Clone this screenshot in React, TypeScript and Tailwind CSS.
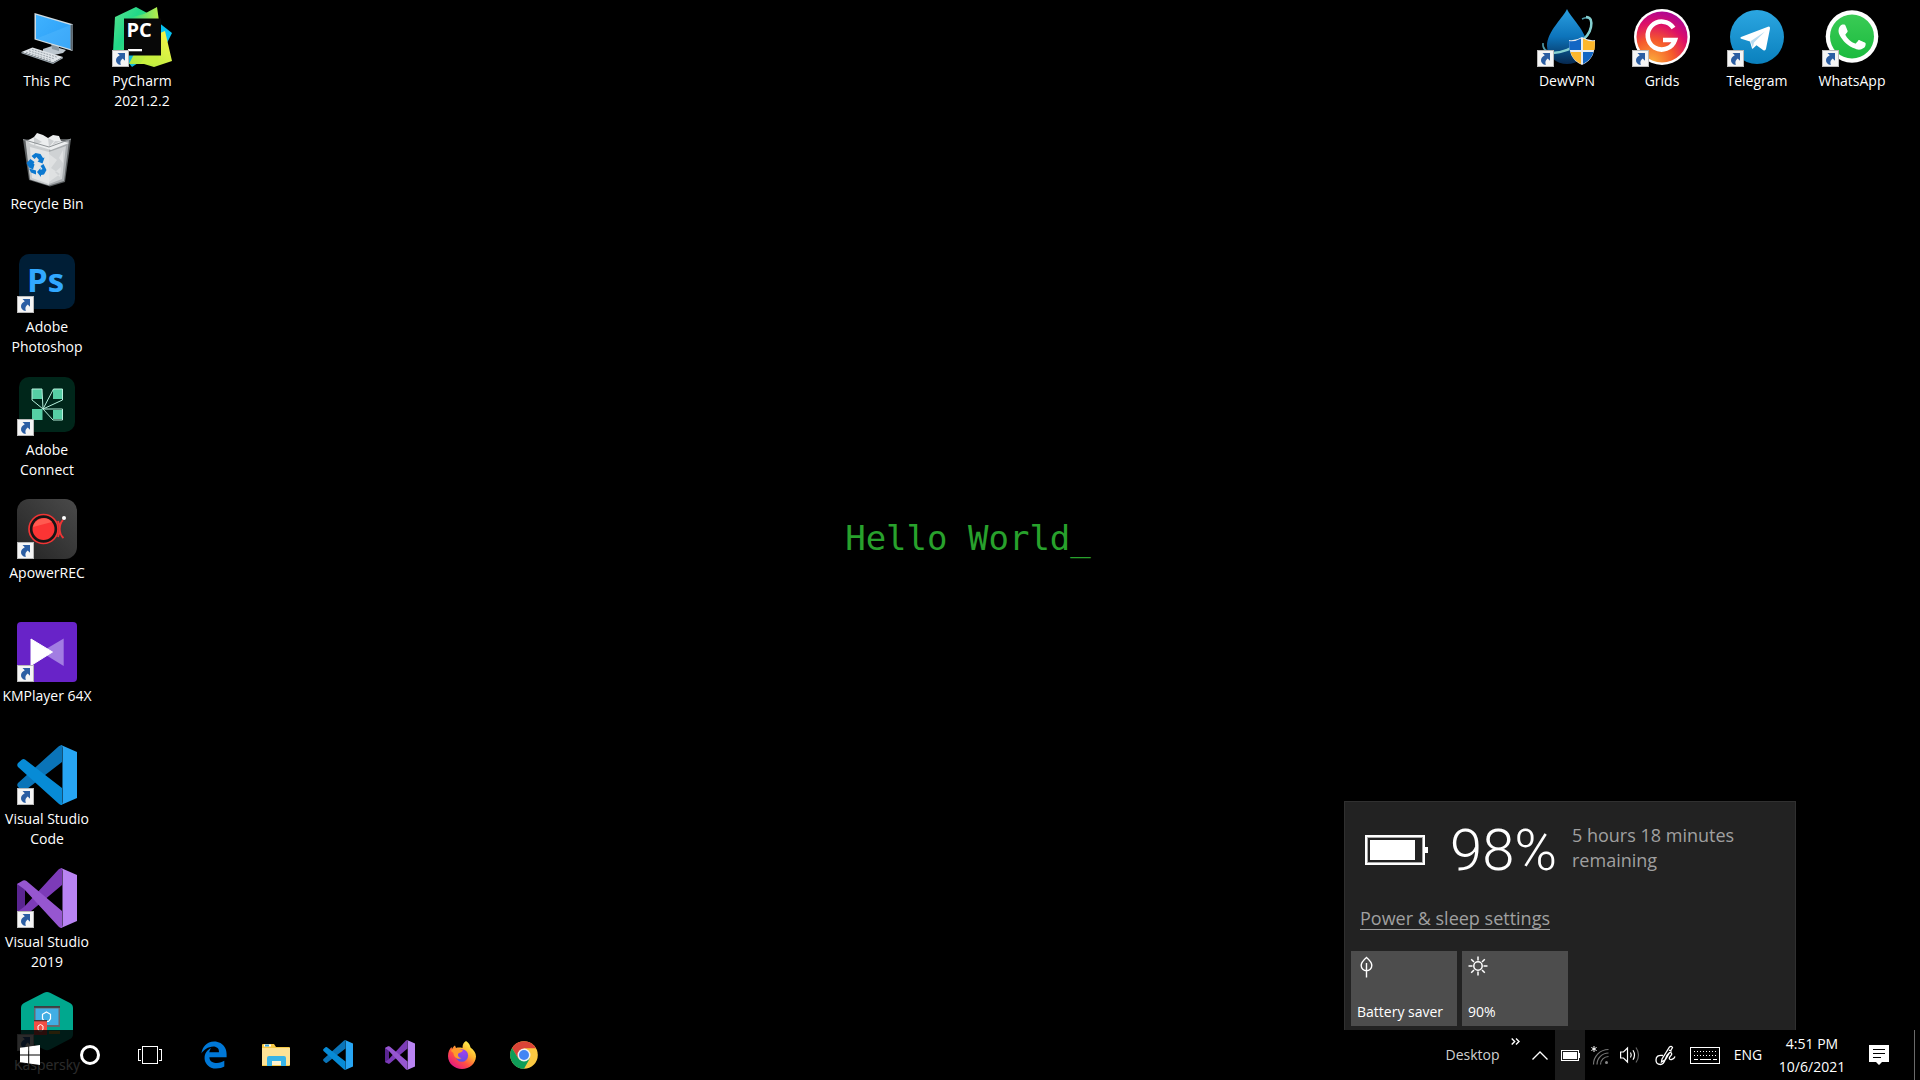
import React from "react";
import { FaEdgeLegacy } from "react-icons/fa";

const ShortcutBadge = () => (
  <svg viewBox="0 0 17 17" className="absolute bottom-0 left-0 size-[17px]" aria-hidden="true">
    <rect width="17" height="17" fill="#b9b9b9" />
    <rect x="1" y="1" width="15" height="15" fill="#f5f5f5" />
    <path d="M5.500 3H13v7.800l-2.300-2.300C8.800 10 7.800 11.800 8.800 15 5.600 14.500 3.800 12.700 4 10c.2-2 1.600-3.500 3.800-4.700z" fill="#2b5ea3" />
  </svg>
);

const ThisPcIcon = () => (
  <svg viewBox="0 0 60 60" className="size-full">
    <defs>
      <linearGradient id="pcScreen" x1="0" y1="0" x2="1" y2="1">
        <stop offset="0" stopColor="#3fb2ff" />
        <stop offset="1" stopColor="#2a9df5" />
      </linearGradient>
    </defs>
    <path d="M26 42l9-3 14 4-3 3-9 2-11-3z" fill="#bcc6ce" />
    <path d="M34 36l8 3v5l-7-2z" fill="#8b979f" />
    <path d="M17.500 6L56 17.300 55.500 44 17.500 32.500z" fill="#cfdbe2" />
    <path d="M19 7.800L53.500 18v24L19 31.700z" fill="url(#pcScreen)" />
    <path d="M19 31.700L53.500 18v24z" fill="#62c0ff" opacity=".3" />
    <path d="M53.500 18l2.500-.7-.5 26.700-2-2z" fill="#56626b" />
    <path d="M4.500 45l11-4.500L46 50l-10 5.500z" fill="#dfe4e8" />
    <path d="M4.500 45L36 55.500l10-5.500v1.200L36 57 4.500 46.200z" fill="#9aa5ad" />
    <path d="M9 45.200l25 8M12 43.800l25 8M15 42.400l25 7.800" stroke="#9aa3aa" strokeWidth="1" strokeDasharray="2 1" />
  </svg>
);

const PyCharmIcon = () => (
  <svg viewBox="0 0 60 60" className="size-full">
    <defs>
      <linearGradient id="pyGreen" x1="0" y1="0" x2="1" y2="1">
        <stop offset="0" stopColor="#5be28c" />
        <stop offset=".4" stopColor="#21d789" />
        <stop offset="1" stopColor="#6fdf5a" />
      </linearGradient>
      <linearGradient id="pyYellow" x1="0" y1="1" x2="1" y2="0">
        <stop offset="0" stopColor="#a6e93d" />
        <stop offset="1" stopColor="#fcf84a" />
      </linearGradient>
      <linearGradient id="pyTop" x1="0" y1="0" x2="1" y2="0">
        <stop offset="0" stopColor="#21d789" />
        <stop offset="1" stopColor="#b9ee4a" />
      </linearGradient>
    </defs>
    <path d="M46 15l14 11-8 16-6-6z" fill="#07c3f2" />
    <path d="M3 10L24 0l13 7-8 20-13 31L1 45z" fill="url(#pyGreen)" />
    <path d="M12 50l10-4 4 10-6 4z" fill="#12b7d8" />
    <path d="M45 0l2 14-18 4-12-7 15-4z" fill="url(#pyTop)" />
    <path d="M17 57l5-10 26-21 5-2 7 30-18 6-10-3z" fill="url(#pyYellow)" />
    <path d="M28 57l8-10 12 0-4 10z" fill="#c9f03f" />
    <rect x="12" y="11.500" width="37" height="37" fill="#080808" />
    <text x="14.500" y="30" fontFamily="'Open Sans', sans-serif" fontSize="20" fontWeight="700" fill="#fff">PC</text>
    <rect x="16" y="42" width="14" height="2.300" fill="#fff" />
  </svg>
);

const RecycleBinIcon = () => (
  <svg viewBox="0 0 60 60" className="size-full">
    <path d="M6 9.500L54 9l-6 43-15 4.500L12 50z" fill="#5d6163" />
    <path d="M8.500 10.500L32 17v38.500L13 49.500z" fill="#c9ccce" />
    <path d="M52 10L32 17v38.500L47 51z" fill="#a7abae" />
    <path d="M10 11l7-4 3-4 6 2 5 3 5-3 6 1 2 5 8 2-18 7-20-6z" fill="#eceeef" />
    <path d="M17 7l8 5-8 3zM31 8l6 3-5 6zM44 11l-6 0-3 4z" fill="#cdd0d2" />
    <path d="M13 17l19 5v32l-17-6z" fill="#e3e5e6" />
    <path d="M32 22l17-6-4 33-13 5z" fill="#cfd2d4" />
    <path d="M32 24l8 6-6 8 9 6-11 8zM46 20l-4 8 4 5zM44 37l-6 5 5 5z" fill="#dfe1e2" />
    <path d="M6 9.500L32 17l22-8" stroke="#8f9497" fill="none" />
    <g fill="#0b78d0" transform="translate(-2.500 0)">
      <path d="M17 26l4-3 5 1 2.500 4 1.500-.5-2 6-5-2 1.500-1.500-2.500-3-2 2z" />
      <path d="M12 33l4-4 4 3-1 1.500 1 1-1.500 5-4-2z" />
      <path d="M14.500 38.500l7 2v4l-5-2zM29 34l3 6-2.500 4.500-3 .5v2l-4-5 3.500-4v2l2-1-2-3z" />
    </g>
  </svg>
);

const PhotoshopIcon = () => (
  <svg viewBox="0 0 60 60" className="size-full">
    <rect x="2" y="1" width="56" height="55" rx="10" fill="#001e36" />
    <text x="10" y="39" fontFamily="'Open Sans', sans-serif" fontSize="33" fontWeight="700" fill="#31a8ff">Ps</text>
  </svg>
);

const ConnectIcon = () => (
  <svg viewBox="0 0 60 60" className="size-full">
    <rect x="2" y="1" width="56" height="55" rx="10" fill="#00261a" />
    <g fill="#56cfa5">
      <path d="M15 13h10v10H15zM36 13h9v10h-9zM15 33h10.500v11H15zM36 34h9v9h-9z" />
    </g>
    <path d="M15 13h10l1 20-11-9zM45.500 13h-9L26 33l19.500-9zM26 33h19.500v11H36z" fill="none" stroke="#b6f0dc" />
  </svg>
);

const ApowerIcon = () => (
  <svg viewBox="0 0 60 60" className="size-full">
    <defs>
      <linearGradient id="apBg" x1="1" y1="0" x2="0" y2="1">
        <stop offset="0" stopColor="#4a4a4a" />
        <stop offset="1" stopColor="#232323" />
      </linearGradient>
    </defs>
    <rect width="60" height="60" rx="12" fill="url(#apBg)" />
    <circle cx="26.500" cy="30" r="14.500" fill="#161616" stroke="#f03434" strokeWidth="1.700" />
    <circle cx="26.500" cy="30" r="11" fill="#fb3434" />
    <path d="M16 28a11 11 0 0 1 19-5z" fill="#ff5a50" />
    <path d="M46 21c-4 4-5 13 .5 18M41 22c2 5 2 11 0 16" fill="none" stroke="#f03434" strokeWidth="1.900" />
    <circle cx="47" cy="19" r="2" fill="#fff" />
  </svg>
);

const KmPlayerIcon = () => (
  <svg viewBox="0 0 60 60" className="size-full">
    <rect width="60" height="60" rx="4" fill="#6823c8" />
    <path d="M46.700 16.500v27.500L24 30z" fill="#a27de2" />
    <path d="M14 17v26.500L35.500 30z" fill="#fff" stroke="#fff" strokeLinejoin="round" />
  </svg>
);

const VsCodeIcon = () => (
  <svg viewBox="0 0 60 60" className="size-full">
    <path d="M1 42L5 45.500q1.500 1 3 0L45 17V0q-2 0-3.500 1.500L1 38q-1.500 2 0 4z" fill="#0a74b8" />
    <path d="M1 18L5 14.500q1.500-1 3 0L45 43V60q-2 0-3.500-1.500L1 22q-1.500-2 0-4z" fill="#078bd6" />
    <path d="M44 0l16 7v46l-16 7q1.500-.5 1.500-3V3q0-2.500-1.500-3z" fill="#27a5f3" />
  </svg>
);

const VisualStudioIcon = () => (
  <svg viewBox="0 0 60 60" className="size-full">
    <path d="M0 16l8-3v34l-8-3z" fill="#5a2591" />
    <path d="M0 44l7 3.500q1.500 0 3-1L45 17V0q-2 0-3.500 1.500L7 39z" fill="#7c3bb8" />
    <path d="M0 16l6-3.500q2-.5 3.500.5L45 43v17q-2 0-3.500-1.500L7 21z" fill="#9656d0" />
    <path d="M44 0l16 7v46l-16 7q1.500-.5 1.500-3V3q0-2.500-1.500-3z" fill="#b984f3" />
  </svg>
);

const KasperskyIcon = () => (
  <svg viewBox="0 0 60 60" className="size-full">
    <path d="M27 1.700q3-1.500 6 0L53 12q3 1.500 3 5v26q0 3.500-3 5L33 58.500q-3 1.500-6 0L7 48q-3-1.500-3-5V17q0-3.500 3-5z" fill="#00a88e" />
    <rect x="17" y="15" width="26" height="21" fill="#66696e" />
    <rect x="18.500" y="17.500" width="23" height="16.500" fill="#41aee4" />
    <rect x="17" y="15" width="26" height="1.800" fill="#3d3d42" />
    <path d="M29.500 21l4 2.300v4.400l-2 2.800h-4l-2-2.800v-4.400z" fill="none" stroke="#fff" strokeWidth="1.200" />
    <rect x="17" y="29" width="13" height="15" fill="#f24f45" />
    <rect x="17" y="29" width="13" height="1.300" fill="#4a3436" />
    <path d="M23.500 33.500l2.500 1.500v3l-1 2h-3l-1-2v-3z" fill="none" stroke="#fff" />
    <rect x="32" y="40" width="11" height="3" fill="#e0b030" />
  </svg>
);

const DewVpnIcon = () => (
  <svg viewBox="0 0 60 60" className="size-full">
    <defs>
      <linearGradient id="dew" x1="0" y1="0" x2="0" y2="1">
        <stop offset="0" stopColor="#2a9fe0" />
        <stop offset=".5" stopColor="#0d74bb" />
        <stop offset="1" stopColor="#06284f" />
      </linearGradient>
    </defs>
    <path d="M30 2c3 8 20 22 20 37a20 18 0 0 1-40 0C10 24 27 10 30 2z" fill="url(#dew)" />
    <path d="M45 12c7-3 10 0 9 7-1 12-17 25-38 27-6-1-11-3-10-10" fill="none" stroke="#4f9aa8" strokeWidth="1.500" />
    <path d="M49 10c5 0 6 4 5 10-2 11-19 25-38 26" fill="none" stroke="#84cfd0" strokeWidth="2.500" />
    <path d="M45 30q6 4 13 3c0 12-2 20-13 25-11-5-13-13-13-25q7 1 13-3z" fill="#e8edf2" />
    <path d="M44 31.500V43H32.500c-.3-3-.4-6-.3-9Q38 35 44 31.500zM46 45h10.500c-1.500 5-4.500 9-10.500 12z" fill="#1266c4" />
    <path d="M46 31.500V43h11.500c.3-3 .4-6 .3-9Q52 35 46 31.500zM44 45H33.500c1.500 5 4.500 9 10.500 12z" fill="#fdb72c" />
  </svg>
);

const GridsIcon = () => (
  <svg viewBox="0 0 60 60" className="size-full">
    <defs>
      <radialGradient id="grids" cx=".3" cy="1" r="1.100">
        <stop offset="0" stopColor="#fbb03b" />
        <stop offset=".4" stopColor="#f55a2b" />
        <stop offset=".7" stopColor="#dd0f68" />
        <stop offset="1" stopColor="#a3049e" />
      </radialGradient>
    </defs>
    <circle cx="30" cy="30" r="28" fill="#fff" />
    <circle cx="30" cy="30" r="25.500" fill="url(#grids)" />
    <path d="M41.500 21A14 14 0 1 0 43 33H31" fill="none" stroke="#fff" strokeWidth="4.500" />
  </svg>
);

const TelegramIcon = () => (
  <svg viewBox="0 0 60 60" className="size-full">
    <defs>
      <linearGradient id="tg" x1="0" y1="0" x2="0" y2="1">
        <stop offset="0" stopColor="#2ba6e1" />
        <stop offset="1" stopColor="#0a80bd" />
      </linearGradient>
    </defs>
    <circle cx="30" cy="30" r="27" fill="url(#tg)" />
    <path d="M14 30l27-10.300q2.300-.6 2 1.800L39 41.700q-.6 2.800-3 1.300l-6.500-4.800-3.500 3.300q-1 .8-1.200-.7L23 34.500l-8.800-2.700q-1.800-.8-.2-1.800z" fill="#fff" />
    <path d="M23.500 34.300L38 24.500 27 35.500l-1.200 5z" fill="#b9dcf0" />
  </svg>
);

const WhatsAppIcon = () => (
  <svg viewBox="0 0 60 60" className="size-full">
    <defs>
      <linearGradient id="wa" x1="0" y1="0" x2="0" y2="1">
        <stop offset="0" stopColor="#3acb55" />
        <stop offset="1" stopColor="#1bbb3f" />
      </linearGradient>
    </defs>
    <circle cx="30" cy="29.500" r="26.300" fill="#fff" />
    <circle cx="30" cy="29.500" r="22" fill="url(#wa)" />
    <path
      transform="translate(3 3) scale(2.250)"
      fill="#fff"
      d="M17.472 14.382c-.297-.149-1.758-.867-2.030-.967-.273-.099-.471-.148-.670.150-.197.297-.767.966-.940 1.164-.173.199-.347.223-.644.075-.297-.150-1.255-.463-2.390-1.475-.883-.788-1.480-1.761-1.653-2.059-.173-.297-.018-.458.130-.606.134-.133.298-.347.446-.520.149-.174.198-.298.298-.497.099-.198.050-.371-.025-.520-.075-.149-.669-1.612-.916-2.207-.242-.579-.487-.500-.669-.510-.173-.008-.371-.010-.570-.010-.198 0-.520.074-.792.372-.272.297-1.040 1.016-1.040 2.479 0 1.462 1.065 2.875 1.213 3.074.149.198 2.096 3.200 5.077 4.487.709.306 1.262.489 1.694.625.712.227 1.360.195 1.871.118.571-.085 1.758-.719 2.006-1.413.248-.694.248-1.289.173-1.413-.074-.124-.272-.198-.570-.347"
    />
  </svg>
);

const ExplorerIcon = () => (
  <svg viewBox="0 0 28 24" className="h-6 w-7">
    <path d="M0 2q0-1 1-1h11l2 3h13q1 0 1 1v17q0 1-1 1H0z" fill="#f6c945" />
    <rect x="2" y="1.500" width="7" height="2" fill="#fff" />
    <rect x="3" y="1.500" width="4" height="2" fill="#3aa3dc" />
    <path d="M0 5h28v17H0z" fill="#fde296" />
    <path d="M5 23v-8q0-2 2-2h15q2 0 2 2v8h-5v-5H10v5z" fill="#38b4e7" />
    <rect x="10" y="18" width="9" height="4" fill="#fdf3cf" />
  </svg>
);

const FirefoxIcon = () => (
  <svg viewBox="0 0 30 30" className="size-[30px]">
    <defs>
      <linearGradient id="ff" x1=".85" y1=".1" x2=".2" y2=".95">
        <stop offset="0" stopColor="#fff44f" />
        <stop offset=".35" stopColor="#ffb02e" />
        <stop offset=".65" stopColor="#ff4f43" />
        <stop offset="1" stopColor="#e31587" />
      </linearGradient>
      <radialGradient id="ffGlobe" cx=".6" cy=".2" r=".9">
        <stop offset="0" stopColor="#a03ff0" />
        <stop offset="1" stopColor="#5b50e0" />
      </radialGradient>
    </defs>
    <path d="M19 1c3 2 4 4 4.500 6.500C27 10 29 13 29 16.500 28.500 24 22.500 29 15 29S1 23.500 1 16c0-4 1.500-7 3.500-9l.5 2c1-2 2-3 3-3.500L9 8c1.500-.5 4-.7 6.500 0C15.500 4.500 16.500 2.500 19 1z" fill="url(#ff)" />
    <circle cx="14.800" cy="15.500" r="6.300" fill="url(#ffGlobe)" />
    <path d="M4 11c2-3 5-3 7-1.500 2 0 4 .3 5 1-1 2-4 2-5 3.500-.5 2 1 4 3.500 4-4 2.500-8-1-8-5z" fill="#ff9a2a" />
  </svg>
);

const ChromeIcon = () => (
  <svg viewBox="0 0 28 28" className="size-7">
    <circle cx="14" cy="14" r="13.800" fill="#fbc942" />
    <path d="M2 7.100A13.800 13.800 0 0 1 26 7.300H14L8.200 17.400z" fill="#db4437" />
    <path d="M2 7.100A13.800 13.800 0 0 0 14 27.800L19.800 17.500 8.300 17.500z" fill="#0f9d58" />
    <circle cx="14" cy="14" r="6.500" fill="#f1f1f1" />
    <circle cx="14" cy="14" r="5" fill="#4285f4" />
  </svg>
);

type Item = { label: string; icon: React.ReactNode; shortcut?: boolean };

const leftItems: Item[] = [
  { label: "This PC", icon: <ThisPcIcon /> },
  { label: "Recycle Bin", icon: <RecycleBinIcon /> },
  { label: "Adobe Photoshop", icon: <PhotoshopIcon />, shortcut: true },
  { label: "Adobe Connect", icon: <ConnectIcon />, shortcut: true },
  { label: "ApowerREC", icon: <ApowerIcon />, shortcut: true },
  { label: "KMPlayer 64X", icon: <KmPlayerIcon />, shortcut: true },
  { label: "Visual Studio Code", icon: <VsCodeIcon />, shortcut: true },
  { label: "Visual Studio 2019", icon: <VisualStudioIcon />, shortcut: true },
  { label: "Kaspersky", icon: <KasperskyIcon />, shortcut: true },
];

const rightItems: Item[] = [
  { label: "DewVPN", icon: <DewVpnIcon />, shortcut: true },
  { label: "Grids", icon: <GridsIcon />, shortcut: true },
  { label: "Telegram", icon: <TelegramIcon />, shortcut: true },
  { label: "WhatsApp", icon: <WhatsAppIcon />, shortcut: true },
];

const DesktopIcon = ({ label, icon, shortcut }: Item) => (
  <button className="flex h-[123px] w-[95px] shrink-0 flex-col items-center pt-[7px] pr-px">
    <span className="relative block size-[60px]">
      {icon}
      {shortcut && <ShortcutBadge />}
    </span>
    <span className="mt-1 text-center text-sm leading-5">{label}</span>
  </button>
);

const apps = [
  { name: "Microsoft Edge", icon: <FaEdgeLegacy className="size-7 text-[#0078d7]" /> },
  { name: "File Explorer", icon: <ExplorerIcon /> },
  { name: "Visual Studio Code", icon: <span className="size-[30px]"><VsCodeIcon /></span> },
  { name: "Visual Studio 2019", icon: <span className="size-[30px]"><VisualStudioIcon /></span> },
  { name: "Firefox", icon: <FirefoxIcon /> },
  { name: "Google Chrome", icon: <ChromeIcon /> },
];

const TrayButton = ({ name, className, children }: { name: string; className: string; children: React.ReactNode }) => (
  <button aria-label={name} className={`flex h-full items-center justify-center ${className}`}>
    {children}
  </button>
);

const Flyout = () => (
  <section
    aria-label="Battery"
    className="absolute right-[124px] bottom-[50px] flex w-[452px] flex-col border border-b-0 border-[#303030] bg-[#222222] px-[6px] pb-1"
  >
    <div className="flex h-24 items-center pl-[14px]">
      <svg viewBox="0 0 63 30" className="h-[30px] w-[63px] shrink-0" shapeRendering="crispEdges" aria-hidden="true">
        <rect x="1" y="1" width="58" height="28" fill="none" stroke="#fff" strokeWidth="2" />
        <rect x="2.500" y="2.500" width="55" height="25" fill="none" stroke="#aaa" />
        <rect x="5" y="5" width="45" height="20" fill="#fff" />
        <rect x="60" y="12" width="3" height="6" fill="#fff" />
      </svg>
      <span className="ml-[22px] w-[106px] font-[Roboto] text-[58px] leading-none font-light">98%</span>
      <p className="ml-4 pb-1 text-lg leading-[25px] text-[#a0a0a0]">
        5 hours 18 minutes
        <br />
        remaining
      </p>
    </div>
    <a href="#power" className="mt-2 ml-[9px] self-start text-lg leading-[25px] text-[#a0a0a0] underline underline-offset-4">
      Power &amp; sleep settings
    </a>
    <div className="mt-5 flex gap-[5px]">
      <button className="flex h-[75px] w-[106px] flex-col items-start justify-between bg-[#4d4d4d] px-[6px] pt-[5px] pb-1 text-sm leading-5">
        <svg viewBox="0 0 20 22" className="h-[22px] w-5" fill="none" stroke="#fff" strokeWidth="1.400" aria-hidden="true">
          <path d="M9.500 1.500C6 4.500 4.200 6.500 4.200 9.500a5.300 5.300 0 0 0 10.600 0c0-3-1.800-5-5.300-8zM9.500 7v14.500" />
        </svg>
        Battery saver
      </button>
      <button className="flex h-[75px] w-[106px] flex-col items-start justify-between bg-[#4d4d4d] px-[6px] pt-[5px] pb-1 text-sm leading-5">
        <svg viewBox="0 0 20 20" className="size-5" fill="none" stroke="#fff" strokeWidth="1.500" aria-hidden="true">
          <circle cx="10" cy="10" r="4.200" />
          <path d="M10 .5v4M10 15.500v4M.5 10h4M15.500 10h4M3.200 3.200L6 6M14 14l2.800 2.800M16.800 3.200L14 6M6 14l-2.800 2.800" />
        </svg>
        90%
      </button>
    </div>
  </section>
);

const Taskbar = () => (
  <footer className="absolute inset-x-0 bottom-0 flex h-[50px] items-center bg-black/83">
    <TrayButton name="Start" className="w-[60px]">
      <svg viewBox="0 0 20 20" className="size-5" fill="#fff">
        <path d="M0 2.800L8.200 1.700v7.800H0zM9.200 1.500L20 0v9.500H9.200zM0 10.500h8.200v7.800L0 17.200zM9.200 10.500H20V20L9.200 18.500z" />
      </svg>
    </TrayButton>
    <TrayButton name="Search" className="w-[60px]">
      <span className="size-5 rounded-full border-3 border-white" />
    </TrayButton>
    <TrayButton name="Task View" className="w-[60px]">
      <svg viewBox="0 0 24 18" className="h-[18px] w-6" fill="none" stroke="#fff" shapeRendering="crispEdges">
        <path d="M4.500.5h15v17h-15zM3 3.500H.5v11H3M21 3.500h2.500v11H21" />
      </svg>
    </TrayButton>
    <nav aria-label="Pinned apps" className="ml-[3px] flex h-full">
      {apps.map((a) => (
        <TrayButton key={a.name} name={a.name} className="w-[62px]">
          {a.icon}
        </TrayButton>
      ))}
    </nav>

    <div className="ml-auto flex h-full items-center text-sm">
      <span className="w-[65px] text-center text-[#d0d0d0]">Desktop</span>
      <TrayButton name="More toolbars" className="w-5 pb-7">
        <svg viewBox="0 0 9 7" className="h-[7px] w-[9px]" fill="none" stroke="#fff" strokeWidth="1.400">
          <path d="M.7.5l3 3-3 3M5 .5l3 3-3 3" />
        </svg>
      </TrayButton>
      <TrayButton name="Show hidden icons" className="w-[30px]">
        <svg viewBox="0 0 16 9" className="h-[9px] w-4" fill="none" stroke="#fff" strokeWidth="1.300">
          <path d="M.5 8.500L8 1l7.500 7.500" />
        </svg>
      </TrayButton>
      <TrayButton name="Battery status" className="w-[30px] bg-[#1c1c1c]">
        <svg viewBox="0 0 19 11" className="h-[11px] w-[19px]" shapeRendering="crispEdges">
          <rect x=".5" y=".5" width="17" height="10" fill="none" stroke="#fff" />
          <rect x="2" y="2" width="14" height="7" fill="#fff" />
          <rect x="18" y="3" width="1" height="5" fill="#fff" />
        </svg>
      </TrayButton>
      <TrayButton name="Network" className="w-[30px]">
        <svg viewBox="0 0 18 19" className="h-[19px] w-[18px]" fill="none">
          <path d="M2.500 18.500A15 15 0 0 1 17.500 3.500M6 18.500A11.500 11.500 0 0 1 17.500 7M9.500 18.500A8 8 0 0 1 17.500 10.500" stroke="#777" strokeWidth="1.200" />
          <circle cx="15.500" cy="16.500" r="1.500" fill="#888" />
          <path d="M3 0v6M.4 1.500l5.200 3M5.600 1.500l-5.200 3" stroke="#fff" />
        </svg>
      </TrayButton>
      <TrayButton name="Volume" className="w-[30px]">
        <svg viewBox="0 0 20 18" className="h-[18px] w-5" fill="none" stroke="#fff" strokeWidth="1.200">
          <path d="M.6 6v6h2.900L7.500 16V2L3.500 6z" />
          <path d="M10.500 6.500q1.500 2.500 0 5M13 4.300q3 4.700 0 9.400" />
          <path d="M16 1.500q5 7.500 0 15" stroke="#666" />
        </svg>
      </TrayButton>
      <TrayButton name="Windows Ink Workspace" className="w-10">
        <svg viewBox="0 0 21 21" className="size-[21px]" fill="none" stroke="#fff" strokeWidth="1.300">
          <path d="M7 14L14.500 2q1.800-1.500 3 .5L10.500 14.500 6.500 17zM14 5l2.500 1.500M8 10.500q-7-1-7 4.500 0 4.500 4.500 4.500c5.500 0 4-8.500 8.500-11.500 3-1.500 3.500 1.500 1.500 3-2 2-1.500 4 1 3.500 2-.5 3-1.500 3.500-3" />
        </svg>
      </TrayButton>
      <TrayButton name="Touch keyboard" className="w-10">
        <svg viewBox="0 0 30 17" className="h-[17px] w-[30px]" fill="none" stroke="#fff" shapeRendering="crispEdges">
          <rect x=".5" y=".5" width="29" height="16" />
          <path d="M4 4.500h23M4 8.500h23" strokeDasharray="1 2" />
          <path d="M4 12.500h4M10 12.500h11M23 12.500h4" />
        </svg>
      </TrayButton>
      <button className="h-full w-[46px]">ENG</button>
      <button className="h-full w-[82px] text-center leading-[23px]">
        4:51 PM
        <br />
        10/6/2021
      </button>
      <TrayButton name="Notifications" className="w-[52px]">
        <svg viewBox="0 0 20 20" className="size-5">
          <path d="M0 0h20v17h-7l-3 3-3-3H0z" fill="#fff" />
          <path d="M4 4.500h12M4 8.500h12M4 12.500h8" stroke="#000" />
        </svg>
      </TrayButton>
      <button aria-label="Show desktop" className="ml-[9px] h-full w-[6px] border-l border-[#6a6a6a]" />
    </div>
  </footer>
);

export default function App() {
  return (
    <div className="relative h-screen overflow-hidden bg-black font-['Open_Sans',sans-serif] text-white">
      <div className="absolute inset-0 flex items-center justify-center pb-1 pl-4 font-['DejaVu_Sans_Mono',monospace] text-[34px] leading-none text-[#28a12c]">
        Hello World_
      </div>
      <main className="relative flex justify-between pr-5">
        <div className="flex">
          <div className="flex flex-col">
            {leftItems.map((i) => (
              <DesktopIcon key={i.label} {...i} />
            ))}
          </div>
          <DesktopIcon label="PyCharm 2021.2.2" icon={<PyCharmIcon />} shortcut />
        </div>
        <div className="flex">
          {rightItems.map((i) => (
            <DesktopIcon key={i.label} {...i} />
          ))}
        </div>
      </main>
      <Taskbar />
      <Flyout />
    </div>
  );
}
